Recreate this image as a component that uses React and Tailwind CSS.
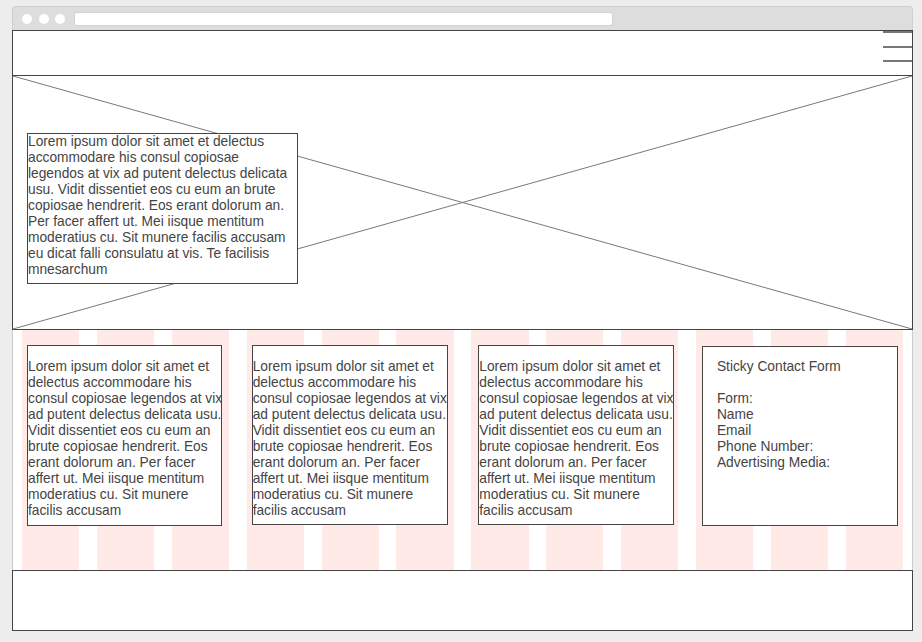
import React from "react";

const lorem =
  "Lorem ipsum dolor sit amet et delectus accommodare his consul copiosae legendos at vix ad putent delectus delicata usu. Vidit dissentiet eos cu eum an brute copiosae hendrerit. Eos erant dolorum an. Per facer affert ut. Mei iisque mentitum moderatius cu. Sit munere facilis accusam";

function Card({ className }) {
  return (
    <div className={"col-span-3 row-start-1 mt-[15px] h-[180px] w-[196px] self-start border border-[#444] bg-white pt-[13px] " + className}>
      <div className="w-[198px]">{lorem}</div>
    </div>
  );
}

export default function App() {
  return (
    <div className="min-h-screen bg-[#ededed] pt-[6px] pl-[12px] font-['Liberation_Sans',Arial,sans-serif] text-[13.75px] leading-[16px] text-[#444]">
      <div className="w-[901px]">
        {/* Browser title bar */}
        <div className="flex h-[24px] items-center rounded-t-[4px] border border-b-0 border-[#cfcfcf] bg-[#dddddd] pl-[9px]">
          <div className="flex items-center gap-[6.5px]">
            <span className="block h-[10px] w-[10px] rounded-full bg-white" />
            <span className="block h-[10px] w-[10px] rounded-full bg-white" />
            <span className="block h-[10px] w-[10px] rounded-full bg-white" />
          </div>
          <div className="ml-[9px] h-[14px] w-[539px] rounded-[3px] border border-[#d2d2d2] bg-white" />
        </div>

        {/* Header */}
        <div className="flex h-[46px] justify-end border border-[#444] bg-white">
          <div className="flex w-[29px] flex-col gap-[12.5px]">
            <span className="block h-[2px] bg-[#777]" />
            <span className="block h-[2px] bg-[#777]" />
            <span className="block h-[2px] bg-[#777]" />
          </div>
        </div>

        {/* Hero */}
        <div className="relative h-[254px] border-x border-b border-[#444] bg-white pl-[14px] pt-[57px]">
          <svg
            className="absolute inset-0 h-full w-full"
            viewBox="0 0 100 100"
            preserveAspectRatio="none"
          >
            <line x1="0" y1="0" x2="100" y2="100" stroke="#777" strokeWidth="1" vectorEffect="non-scaling-stroke" />
            <line x1="0" y1="100" x2="100" y2="0" stroke="#777" strokeWidth="1" vectorEffect="non-scaling-stroke" />
          </svg>
          <div className="relative h-[151px] w-[271px] border border-[#444] bg-white">
            {lorem} eu dicat falli consulatu at vis. Te facilisis mnesarchum
          </div>
        </div>

        {/* Content with grid columns */}
        <div className="grid h-[240px] grid-cols-12 gap-x-[17.6px] border-x border-[#cccccc] bg-white px-[9px]">
          <div className="col-start-1 row-start-1 bg-[#ffeae7]" />
          <div className="col-start-2 row-start-1 bg-[#ffeae7]" />
          <div className="col-start-3 row-start-1 bg-[#ffeae7]" />
          <div className="col-start-4 row-start-1 bg-[#ffeae7]" />
          <div className="col-start-5 row-start-1 bg-[#ffeae7]" />
          <div className="col-start-6 row-start-1 bg-[#ffeae7]" />
          <div className="col-start-7 row-start-1 bg-[#ffeae7]" />
          <div className="col-start-8 row-start-1 bg-[#ffeae7]" />
          <div className="col-start-9 row-start-1 bg-[#ffeae7]" />
          <div className="col-start-10 row-start-1 bg-[#ffeae7]" />
          <div className="col-start-11 row-start-1 bg-[#ffeae7]" />
          <div className="col-start-12 row-start-1 bg-[#ffeae7]" />

          <Card className="col-start-1 ml-[5px] !h-[181px] !w-[195px]" />
          <Card className="col-start-4 ml-[5px]" />
          <Card className="col-start-7 ml-[7px]" />
          <div className="col-span-3 col-start-10 row-start-1 ml-[6px] mt-[16px] h-[180px] w-[196px] self-start border border-[#444] bg-white pl-[14px] pt-[12px]">
            <div>Sticky Contact Form</div>
            <div className="h-[16px]" />
            <div>Form:</div>
            <div>Name</div>
            <div>Email</div>
            <div>Phone Number:</div>
            <div>Advertising Media:</div>
          </div>
        </div>

        {/* Footer */}
        <div className="h-[61px] border border-[#444] bg-white" />
      </div>
    </div>
  );
}
